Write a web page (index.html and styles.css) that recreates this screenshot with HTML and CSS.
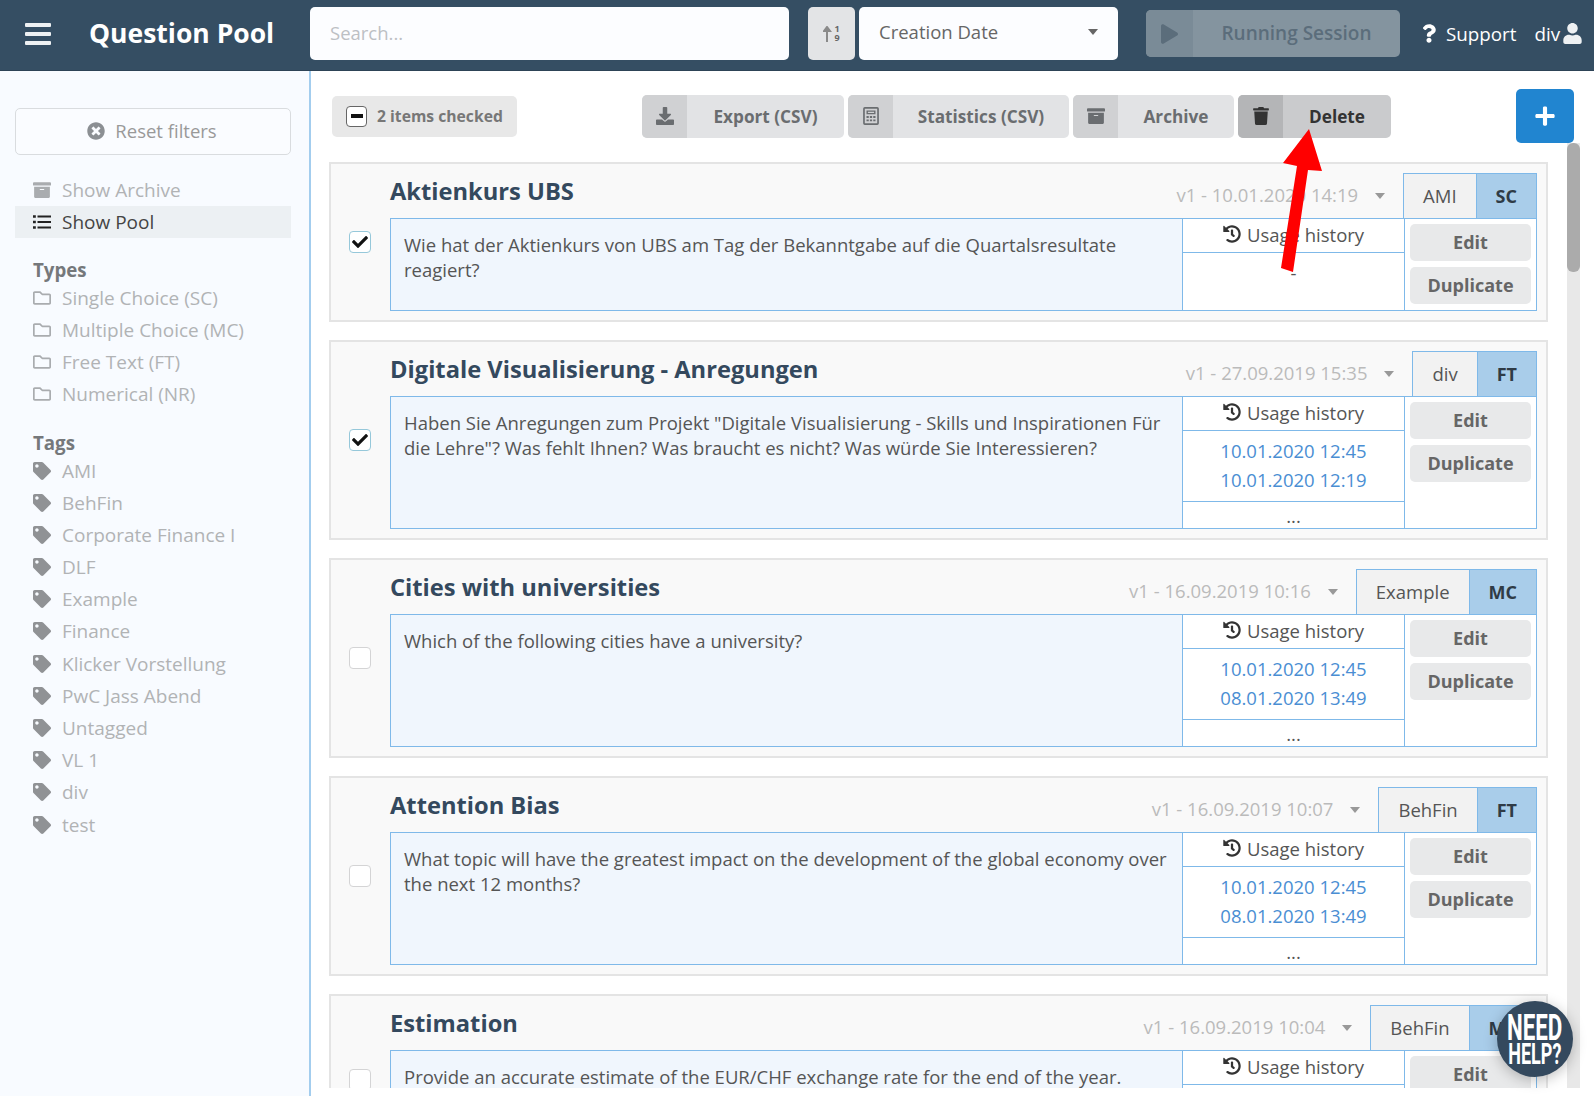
FILE: index.html
```html
<!DOCTYPE html>
<html lang="en">
<head>
<meta charset="utf-8">
<title>Question Pool</title>
<link rel="stylesheet" href="styles.css">
</head>
<body>
<svg class="defs" xmlns="http://www.w3.org/2000/svg">
<symbol id="i-archive" viewBox="0 0 512 512"><path d="M32 448c0 17.7 14.3 32 32 32h384c17.7 0 32-14.3 32-32V160H32v288zm160-212c0-6.6 5.4-12 12-12h104c6.6 0 12 5.4 12 12v8c0 6.6-5.4 12-12 12H204c-6.6 0-12-5.4-12-12v-8zM480 32H32C14.3 32 0 46.3 0 64v48c0 8.8 7.2 16 16 16h480c8.8 0 16-7.2 16-16V64c0-17.7-14.3-32-32-32z"/></symbol>
<symbol id="i-tag" viewBox="0 0 512 512"><path d="M0 252.118V48C0 21.49 21.49 0 48 0h204.118a48 48 0 0 1 33.941 14.059l211.882 211.882c18.745 18.745 18.745 49.137 0 67.882L293.823 497.941c-18.745 18.745-49.137 18.745-67.882 0L14.059 286.059A48 48 0 0 1 0 252.118zM112 64c-26.51 0-48 21.49-48 48s21.49 48 48 48 48-21.49 48-48-21.49-48-48-48z"/></symbol>
<symbol id="i-trash" viewBox="0 0 448 512"><path d="M432 32H312l-9.4-18.7A24 24 0 0 0 281.1 0H166.8a23.72 23.72 0 0 0-21.4 13.3L136 32H16A16 16 0 0 0 0 48v32a16 16 0 0 0 16 16h416a16 16 0 0 0 16-16V48a16 16 0 0 0-16-16zM53.2 467a48 48 0 0 0 47.9 45h245.8a48 48 0 0 0 47.9-45L416 128H32z"/></symbol>
<symbol id="i-user" viewBox="0 0 448 512"><path d="M224 256c70.7 0 128-57.3 128-128S294.7 0 224 0 96 57.3 96 128s57.3 128 128 128zm89.6 32h-16.7c-22.2 10.2-46.9 16-72.9 16s-50.6-5.8-72.9-16h-16.7C60.2 288 0 348.2 0 422.4V464c0 26.5 21.5 48 48 48h352c26.5 0 48-21.5 48-48v-41.6c0-74.2-60.2-134.4-134.4-134.4z"/></symbol>
<symbol id="i-plus" viewBox="0 0 448 512"><path d="M416 208H272V64c0-17.67-14.33-32-32-32h-32c-17.67 0-32 14.33-32 32v144H32c-17.67 0-32 14.33-32 32v32c0 17.67 14.33 32 32 32h144v144c0 17.67 14.33 32 32 32h32c17.67 0 32-14.33 32-32V304h144c17.67 0 32-14.33 32-32v-32c0-17.67-14.33-32-32-32z"/></symbol>
<symbol id="i-play" viewBox="0 0 448 512"><path d="M424.4 214.7L72.4 6.6C43.8-10.3 0 6.1 0 47.9V464c0 37.5 40.7 60.1 72.4 41.3l352-208c31.4-18.5 31.5-64.1 0-82.6z"/></symbol>
<symbol id="i-check" viewBox="0 0 512 512"><path d="M173.898 439.404l-166.4-166.4c-9.997-9.997-9.997-26.206 0-36.204l36.203-36.204c9.997-9.998 26.207-9.998 36.204 0L192 312.69 432.095 72.596c9.997-9.997 26.207-9.997 36.204 0l36.203 36.204c9.997 9.997 9.997 26.206 0 36.204l-294.4 294.401c-9.998 9.997-26.207 9.997-36.204-.001z"/></symbol>
<symbol id="i-times" viewBox="0 0 512 512"><path d="M256 8C119 8 8 119 8 256s111 248 248 248 248-111 248-248S393 8 256 8zm121.6 313.1c4.7 4.7 4.7 12.3 0 17L338 377.6c-4.7 4.7-12.3 4.7-17 0L256 312l-65.1 65.6c-4.7 4.7-12.3 4.7-17 0L134.4 338c-4.7-4.7-4.7-12.3 0-17l65.6-65-65.6-65.1c-4.7-4.7-4.7-12.3 0-17l39.6-39.6c4.7-4.7 12.3-4.7 17 0l65 65.7 65.1-65.6c4.7-4.7 12.3-4.7 17 0l39.6 39.6c4.7 4.7 4.7 12.3 0 17L312 256l65.6 65.1z"/></symbol>
<symbol id="i-folder" viewBox="0 0 512 512"><path d="M464 128H272l-54.63-54.63c-6-6-14.14-9.37-22.63-9.37H48C21.49 64 0 85.49 0 112v288c0 26.51 21.49 48 48 48h416c26.51 0 48-21.49 48-48V176c0-26.51-21.49-48-48-48zm0 272H48V112h140.12l54.63 54.63c6 6 14.14 9.37 22.63 9.37H464v224z"/></symbol>
<symbol id="i-history" viewBox="0 0 512 512"><path d="M504 255.531c.253 136.64-111.18 248.372-247.82 248.468-59.015.042-113.223-20.53-155.822-54.911-11.077-8.94-11.905-25.541-1.839-35.607l11.267-11.267c8.609-8.609 22.353-9.551 31.891-1.984C173.062 425.135 212.781 440 256 440c101.705 0 184-82.311 184-184 0-101.705-82.311-184-184-184-48.814 0-93.149 18.969-126.068 49.932l50.754 50.754c10.08 10.08 2.941 27.314-11.313 27.314H24c-8.837 0-16-7.163-16-16V38.627c0-14.254 17.234-21.393 27.314-11.314l49.372 49.372C129.209 34.136 189.552 8 256 8c136.81 0 247.747 110.78 248 247.531zm-180.912 78.784l9.823-12.63c8.138-10.463 6.253-25.542-4.21-33.679L288 256.349V152c0-13.255-10.745-24-24-24h-16c-13.255 0-24 10.745-24 24v135.651l65.409 50.874c10.463 8.137 25.541 6.253 33.679-4.21z"/></symbol>
<symbol id="i-download" viewBox="0 0 512 512"><path d="M216 0h80c13.3 0 24 10.7 24 24v168h87.7c17.8 0 26.7 21.5 14.1 34.1L269.7 378.3c-7.5 7.5-19.8 7.5-27.3 0L90.1 226.1c-12.6-12.6-3.7-34.1 14.1-34.1H192V24c0-13.3 10.7-24 24-24zm296 376v112c0 13.3-10.7 24-24 24H24c-13.3 0-24-10.7-24-24V376c0-13.3 10.7-24 24-24h146.7l49 49c20.1 20.1 52.5 20.1 72.6 0l49-49H488c13.3 0 24 10.7 24 24z"/></symbol>
<symbol id="i-question" viewBox="0 0 384 512"><path d="M202.021 0C122.202 0 70.503 32.703 29.914 91.026c-7.363 10.58-5.093 25.086 5.178 32.874l43.138 32.709c10.373 7.865 25.132 6.026 33.253-4.148 25.049-31.381 43.63-49.449 82.757-49.449 30.764 0 68.816 19.799 68.816 49.631 0 22.552-18.617 34.134-48.993 51.164-35.423 19.86-82.299 44.576-82.299 106.405V320c0 13.255 10.745 24 24 24h72.471c13.255 0 24-10.745 24-24v-5.773c0-42.86 125.268-44.645 125.268-160.627C377.504 66.256 286.902 0 202.021 0zM192 373.459c-38.196 0-69.271 31.075-69.271 69.271 0 38.195 31.075 69.27 69.271 69.27s69.271-31.075 69.271-69.271-31.075-69.27-69.271-69.27z"/></symbol>
<symbol id="i-calc" viewBox="0 0 448 512"><path fill-rule="evenodd" d="M48 0h352a48 48 0 0 1 48 48v416a48 48 0 0 1-48 48H48a48 48 0 0 1-48-48V48A48 48 0 0 1 48 0zm0 48v416h352V48zM96 96h256v112H96zm40 40v32h176v-32z"/><path d="M96 256h64v56H96zM192 256h64v56h-64zM288 256h64v56h-64zM96 352h64v56H96zM192 352h64v56h-64zM288 352h64v56h-64z"/></symbol>
<symbol id="i-list" viewBox="0 0 512 512"><path d="M0 64h80v72H0zM128 72h384v56H128zM0 220h80v72H0zM128 228h384v56H128zM0 376h80v72H0zM128 384h384v56H128z"/></symbol>
<symbol id="i-caret" viewBox="0 0 10 6"><path d="M0 0h10L5 6z"/></symbol>
</svg>

<header class="topbar">
  <div class="burger"><span></span><span></span><span></span></div>
  <h1 class="brand">Question Pool</h1>
  <div class="search">Search...</div>
  <div class="sort-btn">
    <svg class="sort-arrow" width="9" height="16" viewBox="0 0 9 16"><path d="M4 16V2M1 5l3-4 3 4z" fill="#8a8a8a" stroke="#8a8a8a" stroke-width="2"/></svg>
    <span class="sort-digits"><span>1</span><span>9</span></span>
  </div>
  <div class="select"><span>Creation Date</span><svg class="caret-dark"><use href="#i-caret"/></svg></div>
  <div class="running">
    <span class="running-icon"><svg width="17" height="20"><use href="#i-play"/></svg></span>
    <span class="running-label">Running Session</span>
  </div>
  <div class="support"><svg width="14" height="21"><use href="#i-question"/></svg><span>Support</span></div>
  <div class="account"><span>div</span><svg width="19" height="21"><use href="#i-user"/></svg></div>
</header>

<div class="layout">
  <aside class="sidebar">
    <div class="reset"><svg width="18" height="18"><use href="#i-times"/></svg><span>Reset filters</span></div>
    <ul class="menu first">
      <li class="row"><svg class="ic-soft"><use href="#i-archive"/></svg>Show Archive</li>
      <li class="row active"><svg class="ic-dark"><use href="#i-list"/></svg>Show Pool</li>
    </ul>
    <h2 class="heading">Types</h2>
    <ul class="menu">
      <li class="row"><svg class="ic-soft"><use href="#i-folder"/></svg>Single Choice (SC)</li>
      <li class="row"><svg class="ic-soft"><use href="#i-folder"/></svg>Multiple Choice (MC)</li>
      <li class="row"><svg class="ic-soft"><use href="#i-folder"/></svg>Free Text (FT)</li>
      <li class="row"><svg class="ic-soft"><use href="#i-folder"/></svg>Numerical (NR)</li>
    </ul>
    <h2 class="heading tags-heading">Tags</h2>
    <ul class="menu">
      <li class="row"><svg class="ic-tag"><use href="#i-tag"/></svg>AMI</li>
      <li class="row"><svg class="ic-tag"><use href="#i-tag"/></svg>BehFin</li>
      <li class="row"><svg class="ic-tag"><use href="#i-tag"/></svg>Corporate Finance I</li>
      <li class="row"><svg class="ic-tag"><use href="#i-tag"/></svg>DLF</li>
      <li class="row"><svg class="ic-tag"><use href="#i-tag"/></svg>Example</li>
      <li class="row"><svg class="ic-tag"><use href="#i-tag"/></svg>Finance</li>
      <li class="row"><svg class="ic-tag"><use href="#i-tag"/></svg>Klicker Vorstellung</li>
      <li class="row"><svg class="ic-tag"><use href="#i-tag"/></svg>PwC Jass Abend</li>
      <li class="row"><svg class="ic-tag"><use href="#i-tag"/></svg>Untagged</li>
      <li class="row"><svg class="ic-tag"><use href="#i-tag"/></svg>VL 1</li>
      <li class="row"><svg class="ic-tag"><use href="#i-tag"/></svg>div</li>
      <li class="row"><svg class="ic-tag"><use href="#i-tag"/></svg>test</li>
    </ul>
  </aside>

  <main class="main">
    <div class="toolbar">
      <div class="checked"><span class="minus-box"><i></i></span>2 items checked</div>
      <div class="actions">
        <div class="act act-export"><span class="act-icon"><svg><use href="#i-download"/></svg></span><span class="act-label">Export (CSV)</span></div>
        <div class="act act-stats"><span class="act-icon"><svg><use href="#i-calc"/></svg></span><span class="act-label">Statistics (CSV)</span></div>
        <div class="act act-archive"><span class="act-icon"><svg><use href="#i-archive"/></svg></span><span class="act-label">Archive</span></div>
        <div class="act act-delete"><span class="act-icon"><svg><use href="#i-trash"/></svg></span><span class="act-label">Delete</span></div>
      </div>
      <div class="add"><svg width="20" height="22"><use href="#i-plus"/></svg></div>
    </div>

    <div class="scroller">
      <div class="cards">
        <article class="card">
          <div class="check-col"><span class="box on"><svg width="16" height="16"><use href="#i-check"/></svg></span></div>
          <div class="card-body">
            <div class="card-top">
              <h3 class="title">Aktienkurs UBS</h3>
              <span class="version">v1 - 10.01.2020 14:19</span><svg class="caret"><use href="#i-caret"/></svg>
              <div class="labels"><span class="label">AMI</span><span class="label type">SC</span></div>
            </div>
            <div class="card-main">
              <div class="text">Wie hat der Aktienkurs von UBS am Tag der Bekanntgabe auf die Quartalsresultate reagiert?</div>
              <div class="usage">
                <div class="usage-head"><svg width="18" height="18"><use href="#i-history"/></svg>Usage history</div>
                <div class="usage-dates">-</div>
              </div>
              <div class="buttons"><span class="btn">Edit</span><span class="btn">Duplicate</span></div>
            </div>
          </div>
        </article>

        <article class="card">
          <div class="check-col"><span class="box on"><svg width="16" height="16"><use href="#i-check"/></svg></span></div>
          <div class="card-body">
            <div class="card-top">
              <h3 class="title">Digitale Visualisierung - Anregungen</h3>
              <span class="version">v1 - 27.09.2019 15:35</span><svg class="caret"><use href="#i-caret"/></svg>
              <div class="labels"><span class="label">div</span><span class="label type">FT</span></div>
            </div>
            <div class="card-main">
              <div class="text">Haben Sie Anregungen zum Projekt "Digitale Visualisierung - Skills und Inspirationen Für die Lehre"? Was fehlt Ihnen? Was braucht es nicht? Was würde Sie Interessieren?</div>
              <div class="usage">
                <div class="usage-head"><svg width="18" height="18"><use href="#i-history"/></svg>Usage history</div>
                <div class="usage-dates"><a>10.01.2020 12:45</a><a>10.01.2020 12:19</a></div>
                <div class="usage-more">...</div>
              </div>
              <div class="buttons"><span class="btn">Edit</span><span class="btn">Duplicate</span></div>
            </div>
          </div>
        </article>

        <article class="card">
          <div class="check-col"><span class="box"></span></div>
          <div class="card-body">
            <div class="card-top">
              <h3 class="title">Cities with universities</h3>
              <span class="version">v1 - 16.09.2019 10:16</span><svg class="caret"><use href="#i-caret"/></svg>
              <div class="labels"><span class="label">Example</span><span class="label type">MC</span></div>
            </div>
            <div class="card-main">
              <div class="text">Which of the following cities have a university?</div>
              <div class="usage">
                <div class="usage-head"><svg width="18" height="18"><use href="#i-history"/></svg>Usage history</div>
                <div class="usage-dates"><a>10.01.2020 12:45</a><a>08.01.2020 13:49</a></div>
                <div class="usage-more">...</div>
              </div>
              <div class="buttons"><span class="btn">Edit</span><span class="btn">Duplicate</span></div>
            </div>
          </div>
        </article>

        <article class="card">
          <div class="check-col"><span class="box"></span></div>
          <div class="card-body">
            <div class="card-top">
              <h3 class="title">Attention Bias</h3>
              <span class="version">v1 - 16.09.2019 10:07</span><svg class="caret"><use href="#i-caret"/></svg>
              <div class="labels"><span class="label">BehFin</span><span class="label type">FT</span></div>
            </div>
            <div class="card-main">
              <div class="text">What topic will have the greatest impact on the development of the global economy over the next 12 months?</div>
              <div class="usage">
                <div class="usage-head"><svg width="18" height="18"><use href="#i-history"/></svg>Usage history</div>
                <div class="usage-dates"><a>10.01.2020 12:45</a><a>08.01.2020 13:49</a></div>
                <div class="usage-more">...</div>
              </div>
              <div class="buttons"><span class="btn">Edit</span><span class="btn">Duplicate</span></div>
            </div>
          </div>
        </article>

        <article class="card">
          <div class="check-col"><span class="box"></span></div>
          <div class="card-body">
            <div class="card-top">
              <h3 class="title">Estimation</h3>
              <span class="version">v1 - 16.09.2019 10:04</span><svg class="caret"><use href="#i-caret"/></svg>
              <div class="labels"><span class="label">BehFin</span><span class="label type">MC</span></div>
            </div>
            <div class="card-main">
              <div class="text">Provide an accurate estimate of the EUR/CHF exchange rate for the end of the year.</div>
              <div class="usage">
                <div class="usage-head"><svg width="18" height="18"><use href="#i-history"/></svg>Usage history</div>
                <div class="usage-dates"><a>10.01.2020 12:45</a></div>
                <div class="usage-more">...</div>
              </div>
              <div class="buttons"><span class="btn">Edit</span><span class="btn">Duplicate</span></div>
            </div>
          </div>
        </article>
      </div>
      <div class="scroll-track"><div class="scroll-thumb"></div></div>
    </div>
  </main>
</div>

<svg class="arrow" width="60" height="150" viewBox="0 0 60 150"><polygon points="34,4 47,46 33,45 18,147 6,143 22,41 8,38" fill="#ff0000"/></svg>

<div class="help"><span class="help-a">NEED</span><span class="help-b">HELP?</span></div>
</body>
</html>
```

FILE: styles.css
```css
* { box-sizing: border-box; }
html, body { margin: 0; height: 1096px; overflow: hidden; }
body {
  font-family: "Open Sans", "Liberation Sans", sans-serif;
  font-size: 18.5px;
  color: #555;
  background: #fff;
}
h1, h2, h3, ul { margin: 0; padding: 0; }
ul { list-style: none; }
.defs { display: none; }

.topbar {
  height: 71px;
  background: #354e63;
  border-bottom: 1px solid #2d4356;
  display: flex;
  align-items: center;
  padding-bottom: 3px;
  color: #fff;
}
.topbar > * { flex: none; }
.burger {
  width: 26px;
  margin-left: 25px;
  display: flex;
  flex-direction: column;
  gap: 5px;
}
.burger span { height: 4px; background: #eef1f3; border-radius: 1px; }
.brand {
  font-size: 26.5px;
  font-weight: 700;
  width: 221px;
  margin-left: 38px;
  padding-bottom: 1px;
  white-space: nowrap;
}
.search {
  width: 479px;
  height: 53px;
  background: #fcfdff;
  border-radius: 5px;
  color: #bcc0c4;
  padding: 0 20px;
  line-height: 51px;
}
.sort-btn {
  width: 47px;
  height: 53px;
  margin-left: 19px;
  background: #e3e4e6;
  border-radius: 5px;
  display: flex;
  align-items: center;
  justify-content: center;
  gap: 2px;
}
.sort-digits {
  display: flex;
  flex-direction: column;
  font-size: 9px;
  line-height: 8.5px;
  font-weight: 700;
  color: #666;
}
.select {
  width: 259px;
  height: 53px;
  margin-left: 4px;
  background: #fcfdff;
  border-radius: 5px;
  color: #666;
  display: flex;
  align-items: center;
  justify-content: space-between;
  padding: 0 20px 4px;
}
.caret-dark { width: 10px; height: 6px; fill: #666; }
.running {
  width: 254px;
  height: 47px;
  margin-left: 28px;
  background: #84949f;
  border-radius: 5px;
  display: flex;
  overflow: hidden;
  font-size: 19px;
  font-weight: 600;
  color: #5b6d7b;
}
.running-icon {
  width: 47px;
  background: #7a8b97;
  display: flex;
  align-items: center;
  justify-content: center;
  fill: #5b6d7b;
}
.running-label { flex: 1; text-align: center; line-height: 47px; }
.support {
  margin-left: 22px;
  display: flex;
  align-items: center;
  gap: 10px;
  fill: #fff;
  font-size: 18.8px;
}
.account {
  margin-left: 18px;
  display: flex;
  align-items: center;
  gap: 3px;
  fill: #eef1f3;
  font-size: 18.8px;
}

.layout { display: flex; height: 1025px; }
.sidebar {
  width: 311px;
  background: #f8fbff;
  border-right: 2px solid #a3cdee;
  padding: 37px 0 0 15px;
}
.reset {
  width: 276px;
  height: 47px;
  background: #fafcff;
  border: 1px solid #d9dcdf;
  border-radius: 5px;
  display: flex;
  align-items: center;
  justify-content: center;
  gap: 10px;
  color: #999;
  fill: #8b8f93;
  margin-bottom: 19px;
  padding: 0 2px 2px 0;
}
.menu { width: 276px; }
.row {
  height: 32.2px;
  padding: 0 0 1px 18px;
  display: flex;
  align-items: center;
  gap: 11px;
  color: #b1b3b5;
  font-size: 19px;
  white-space: nowrap;
}
.row svg { width: 18px; height: 18px; flex: none; }
.row.active { background: #ecf0f3; color: #444; height: 32px; }
.ic-soft { fill: #a9acaf; }
.ic-dark { fill: #222; }
.ic-tag { fill: #909295; }
.heading {
  font-size: 18.7px;
  font-weight: 700;
  color: #75787b;
  line-height: 24px;
  margin: 20px 0 0 18px;
}
.tags-heading { margin-top: 20px; }

.main {
  width: 1283px;
  padding: 18px 0 8px 18px;
  display: flex;
  flex-direction: column;
  background: #fff;
}
.toolbar {
  height: 54px;
  flex: none;
  display: flex;
  align-items: center;
  padding-left: 3px;
  padding-right: 20px;
}
.checked {
  width: 185px;
  height: 41px;
  background: #e8e8e8;
  border-radius: 5px;
  display: flex;
  align-items: center;
  gap: 10px;
  padding-left: 14px;
  font-size: 15.7px;
  font-weight: 700;
  color: #777;
  white-space: nowrap;
}
.minus-box {
  width: 21px;
  height: 21px;
  background: #fff;
  border: 1px solid #666;
  border-radius: 4px;
  display: flex;
  align-items: center;
  justify-content: center;
}
.minus-box i { width: 12px; height: 4px; background: #111; display: block; }
.actions { display: flex; gap: 4px; margin-left: 125px; }
.act {
  height: 43px;
  background: #e2e3e5;
  border-radius: 5px;
  display: flex;
  overflow: hidden;
  font-size: 17.2px;
  font-weight: 700;
  color: #6a6d70;
}
.act-export { width: 202px; }
.act-stats { width: 221px; }
.act-archive { width: 161px; }
.act-delete { width: 153px; background: #cacbcd; color: #333; }
.act-icon {
  width: 45px;
  flex: none;
  background: #d0d1d3;
  display: flex;
  align-items: center;
  justify-content: center;
  fill: #6a6d70;
}
.act-delete .act-icon { background: #b4b5b7; fill: #333; }
.act-icon svg { width: 18px; height: 18px; }
.act-label { flex: 1; text-align: center; line-height: 43px; white-space: nowrap; }
.add {
  width: 58px;
  height: 54px;
  margin-left: auto;
  background: #2185d0;
  border-radius: 5px;
  display: flex;
  align-items: center;
  justify-content: center;
  fill: #fff;
}

.scroller {
  flex: 1;
  min-height: 0;
  display: flex;
  overflow: hidden;
}
.cards {
  width: 1219px;
  padding-top: 19px;
  display: flex;
  flex-direction: column;
  gap: 18px;
}
.card {
  flex: none;
  background: #f9f9f9;
  border: 2px solid #e4e4e4;
  padding: 9px 9px 9px 0;
  display: flex;
  align-items: center;
}
.check-col { width: 59px; flex: none; display: flex; justify-content: center; padding-right: 2px; }
.box {
  width: 22px;
  height: 22px;
  background: #fff;
  border: 1px solid #d4d4d5;
  border-radius: 4px;
  display: flex;
  align-items: center;
  justify-content: center;
  fill: #111;
}
.box.on { border-color: #96c8da; }
.card-body { flex: 1; min-width: 0; }
.card-top { height: 45px; display: flex; align-items: center; }
.title {
  font-size: 23.7px;
  font-weight: 700;
  color: #34495e;
  margin-right: auto;
  padding-bottom: 9px;
  white-space: nowrap;
}
.version { color: #bbb; white-space: nowrap; padding-bottom: 2px; }
.caret { width: 10px; height: 6px; fill: #999; margin: 0 18px 0 17px; }
.labels {
  align-self: stretch;
  display: flex;
  border: 1px solid #7fb9e9;
  border-bottom: 0;
}
.label {
  padding: 0 19px;
  line-height: 44px;
  background: #f2f2f2;
  white-space: nowrap;
}
.label.type {
  background: #a9cdea;
  border-left: 1px solid #7fb9e9;
  font-size: 18px;
  font-weight: 700;
  color: #2f3b46;
}
.card-main {
  display: flex;
  border: 1px solid #7fb9e9;
}
.text {
  flex: 1;
  min-width: 0;
  background: #f0f6fd;
  padding: 13px 13px;
  line-height: 25.4px;
}
.usage {
  width: 223px;
  flex: none;
  background: #fff;
  border-left: 1px solid #7fb9e9;
  border-right: 1px solid #7fb9e9;
  display: flex;
  flex-direction: column;
  text-align: center;
}
.usage-head {
  height: 34px;
  border-bottom: 1px solid #7fb9e9;
  display: flex;
  align-items: center;
  justify-content: center;
  gap: 6px;
  fill: #333;
  padding-bottom: 3px;
}
.usage-dates {
  padding: 5px 0 7px;
  line-height: 29px;
  display: flex;
  flex-direction: column;
}
.usage-dates a { color: #4a8ed3; }
.usage-more {
  height: 27px;
  border-top: 1px solid #7fb9e9;
  line-height: 27px;
}
.buttons {
  width: 131px;
  flex: none;
  background: #fff;
  padding: 5px 5px 6px;
  display: flex;
  flex-direction: column;
  gap: 6px;
}
.btn {
  height: 37px;
  background: #e8e9ea;
  border-radius: 5px;
  text-align: center;
  line-height: 37px;
  font-size: 18px;
  font-weight: 700;
  color: #666;
}

.scroll-track {
  width: 13px;
  margin-left: 19px;
  background: #e8e8e8;
  flex: none;
}
.scroll-thumb { height: 129px; background: #ababab; border-radius: 6px; }

.arrow { position: absolute; left: 1275px; top: 125px; }

.help {
  position: absolute;
  left: 1497px;
  top: 1001px;
  width: 76px;
  height: 76px;
  border-radius: 50%;
  background: #34495e;
  box-shadow: 0 3px 14px rgba(0, 0, 0, .25);
  color: #fff;
  display: flex;
  flex-direction: column;
  align-items: center;
  justify-content: center;
  font-family: "Roboto", "Liberation Sans", sans-serif;
  font-weight: 700;
}
.help-a { font-size: 36px; line-height: 29px; transform: scaleX(.62); }
.help-b { font-size: 29px; line-height: 22px; transform: scaleX(.62); }
```
